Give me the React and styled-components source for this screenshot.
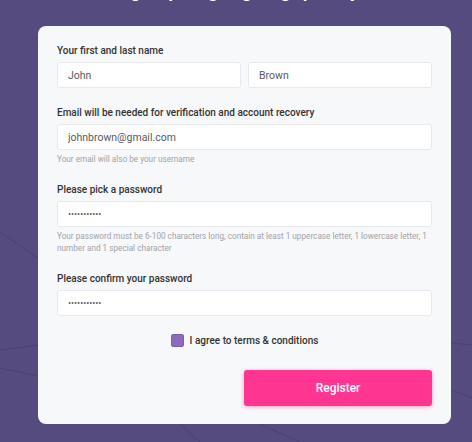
import React, { useState } from "react";
import styled, { createGlobalStyle } from "styled-components";

const GlobalStyle = createGlobalStyle`
  html, body {
    margin: 0;
    padding: 0;
    background: #554b7e;
    font-family: Roboto, "Liberation Sans", Arial, sans-serif;
    overflow: hidden;
  }
  * { box-sizing: border-box; }
`;

const Page = styled.div`
  position: relative;
  width: 472px;
  height: 442px;
  overflow: hidden;
`;

const Lines = styled.svg`
  position: absolute;
  inset: 0;
  pointer-events: none;
`;

const Title = styled.h1`
  position: relative;
  margin: -22.5px 0 0 0;
  height: 24px;
  font-size: 20px;
  line-height: 24px;
  font-weight: 500;
  color: #ffffff;
  text-align: center;
`;

const Card = styled.form`
  position: relative;
  width: 413px;
  margin: 24.5px 0 0 38px;
  padding: 19px 19px 18px;
  background: #f7f8fa;
  border-radius: 8px;
  display: flex;
  flex-direction: column;
  gap: 19px;
`;

const Field = styled.div`
  display: flex;
  flex-direction: column;
`;

const Label = styled.label`
  font-size: 10px;
  line-height: 12px;
  font-weight: 500;
  color: #333333;
  margin-bottom: 5px;
`;

const Row = styled.div`
  display: flex;
  gap: 7px;

  & > input {
    flex: 1;
    min-width: 0;
  }
`;

const Input = styled.input`
  display: block;
  width: 100%;
  height: 26px;
  padding: 0 10px;
  background: #ffffff;
  border: 1px solid #e8e9ee;
  border-radius: 3px;
  font-family: inherit;
  font-size: ${(p) => (p.type === "password" ? "9px" : "10.5px")};
  color: #5a5a5e;
  outline: none;
`;

const Help = styled.p`
  margin: 4px 0 0;
  font-size: 8.2px;
  line-height: 11.4px;
  color: #a3a3a8;
`;

const Agree = styled.label`
  display: flex;
  align-items: center;
  justify-content: center;
  gap: 6px;
  margin-top: -1px;
  font-size: 10px;
  font-weight: 500;
  color: #333333;
  cursor: pointer;
`;

const Box = styled.span`
  width: 13px;
  height: 13px;
  border-radius: 2px;
  background: ${(p) => (p.checked ? "#8c6bbd" : "#ffffff")};
  border: 1px solid #7d5fb2;
`;

const Actions = styled.div`
  display: flex;
  justify-content: flex-end;
  margin-top: 4px;
`;

const Register = styled.button`
  width: 188px;
  height: 36px;
  border: none;
  border-radius: 3px;
  background: #ff3592;
  box-shadow: 0 1px 4px rgba(255, 53, 146, 0.45);
  color: #ffffff;
  font-family: inherit;
  font-size: 12px;
  font-weight: 500;
  cursor: pointer;
`;

export default function App() {
  const [agree, setAgree] = useState(true);

  return (
    <Page>
      <GlobalStyle />
      <Lines width="472" height="442" viewBox="0 0 472 442">
        <g stroke="#4b4273" strokeWidth="1" fill="none">
          <path d="M0 232 L38 258" />
          <path d="M0 350 L38 345" />
          <path d="M0 368 L38 376" />
          <path d="M451 343 L472 345" />
          <path d="M451 390 L472 398" />
          <path d="M180 424 L200 442" />
          <path d="M260 424 L300 442" />
        </g>
      </Lines>
      <Title>Sign up to get going quickly</Title>
      <Card onSubmit={(e) => e.preventDefault()}>
        <Field>
          <Label>Your first and last name</Label>
          <Row>
            <Input defaultValue="John" />
            <Input defaultValue="Brown" />
          </Row>
        </Field>
        <Field>
          <Label>Email will be needed for verification and account recovery</Label>
          <Input defaultValue="johnbrown@gmail.com" />
          <Help>Your email will also be your username</Help>
        </Field>
        <Field>
          <Label>Please pick a password</Label>
          <Input type="password" defaultValue="password123" />
          <Help>
            Your password must be 6-100 characters long, contain at least 1
            uppercase letter, 1 lowercase letter, 1 number and 1 special
            character
          </Help>
        </Field>
        <Field>
          <Label>Please confirm your password</Label>
          <Input type="password" defaultValue="password123" />
        </Field>
        <Agree onClick={() => setAgree(!agree)}>
          <Box checked={agree} />
          I agree to terms &amp; conditions
        </Agree>
        <Actions>
          <Register type="submit">Register</Register>
        </Actions>
      </Card>
    </Page>
  );
}
